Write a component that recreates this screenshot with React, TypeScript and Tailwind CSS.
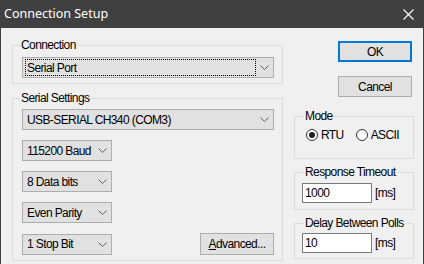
type ComboProps = {
  label: string;
  width: string;
  focus?: boolean;
};

function Chevron() {
  return (
    <svg width="9" height="5" viewBox="0 0 9 5" className="shrink-0">
      <polyline points="0.5,0.5 4.5,4.5 8.5,0.5" fill="none" stroke="#606060" strokeWidth="1" />
    </svg>
  );
}

function Combo({ label, width, focus }: ComboProps) {
  return (
    <div className={`${width} h-[21px] bg-[#e1e1e1] border border-[#adadad] flex items-center pl-[2px] pr-[4px] gap-[4px]`}>
      <div className={`grow h-[17px] flex items-center pl-[1px] ${focus ? "border border-dotted border-black" : "border border-transparent"}`}>
        {label}
      </div>
      <Chevron />
    </div>
  );
}

function Radio({ label, checked }: { label: string; checked?: boolean }) {
  return (
    <div className="flex items-center gap-[3px]">
      <div className="w-[12px] h-[12px] rounded-full border border-[#333] bg-white flex items-center justify-center">
        {checked && <div className="w-[6px] h-[6px] rounded-full bg-[#222]" />}
      </div>
      <span>{label}</span>
    </div>
  );
}

export default function App() {
  return (
    <div className="w-[424px] h-[264px] bg-[#f0f0f0] border-x border-[#404040] flex flex-col overflow-hidden whitespace-nowrap text-[12px] leading-[14px] tracking-[-0.6px] text-black font-['Liberation_Sans',Arial,sans-serif]">
      {/* title bar */}
      <div className="h-[28px] shrink-0 bg-[#404040] flex items-center justify-between pl-[3px] pr-[9px]">
        <span className="text-white text-[12.5px] tracking-normal font-['Noto_Sans',sans-serif]">Connection Setup</span>
        <svg width="11" height="11" viewBox="0 0 11 11">
          <path d="M0.5 0.5 L10.5 10.5 M10.5 0.5 L0.5 10.5" stroke="#fff" strokeWidth="1.1" />
        </svg>
      </div>

      <div className="flex pl-[11px] pt-[10px]">
        {/* left column */}
        <div className="w-[271px] flex flex-col">
          <fieldset className="border border-[#dcdcdc] pl-[9px] pr-[8px] pb-[5px]">
            <legend className="ml-[-2px] px-[1px]">Connection</legend>
            <div className="mt-[5px]">
              <Combo label="Serial Port" width="w-full" focus />
            </div>
          </fieldset>

          <fieldset className="mt-[7px] border border-[#dcdcdc] pl-[9px] pr-[8px] pb-[5px]">
            <legend className="ml-[-2px] px-[1px]">Serial Settings</legend>
            <div className="mt-[4px] flex flex-col gap-[10px]">
              <Combo label="USB-SERIAL CH340 (COM3)" width="w-full" />
              <Combo label="115200 Baud" width="w-[90px]" />
              <Combo label="8 Data bits" width="w-[90px]" />
              <Combo label="Even Parity" width="w-[90px]" />
              <div className="flex items-center justify-between">
                <Combo label="1 Stop Bit" width="w-[90px]" />
                <button className="w-[74px] h-[22px] bg-[#e1e1e1] border border-[#adadad] flex items-center justify-center">
                  <span><span className="underline">A</span>dvanced...</span>
                </button>
              </div>
            </div>
          </fieldset>
        </div>

        {/* right column */}
        <div className="ml-[11px] w-[120px] flex flex-col">
          <div className="pl-[44px] flex flex-col">
            <button className="mt-[3px] w-[74px] h-[21px] bg-[#e1e1e1] border-2 border-[#0078d7] flex items-center justify-center">
              OK
            </button>
            <button className="mt-[14px] w-[74px] h-[21px] bg-[#e1e1e1] border border-[#adadad] flex items-center justify-center">
              Cancel
            </button>
          </div>

          <fieldset className="mt-[12px] border border-[#dcdcdc] pl-[11px] pb-[16px]">
            <legend className="ml-[-2px] px-[1px]">Mode</legend>
            <div className="mt-[5px] flex items-center gap-[12px]">
              <Radio label="RTU" checked />
              <Radio label="ASCII" />
            </div>
          </fieldset>

          <fieldset className="mt-[6px] border border-[#dcdcdc] pl-[7px] pb-[6px]">
            <legend className="ml-[2px] px-[1px]">Response Timeout</legend>
            <div className="mt-[4px] flex items-center gap-[3px]">
              <div className="w-[70px] h-[20px] bg-white border border-[#7a7a7a] flex items-center pl-[2px]">1000</div>
              <span>[ms]</span>
            </div>
          </fieldset>

          <fieldset className="mt-[6px] border border-[#dcdcdc] pl-[7px] pb-[5px]">
            <legend className="ml-[2px] px-[1px]">Delay Between Polls</legend>
            <div className="mt-[3px] flex items-center gap-[3px]">
              <div className="w-[70px] h-[20px] bg-white border border-[#7a7a7a] flex items-center pl-[2px]">10</div>
              <span>[ms]</span>
            </div>
          </fieldset>
        </div>
      </div>
    </div>
  );
}
